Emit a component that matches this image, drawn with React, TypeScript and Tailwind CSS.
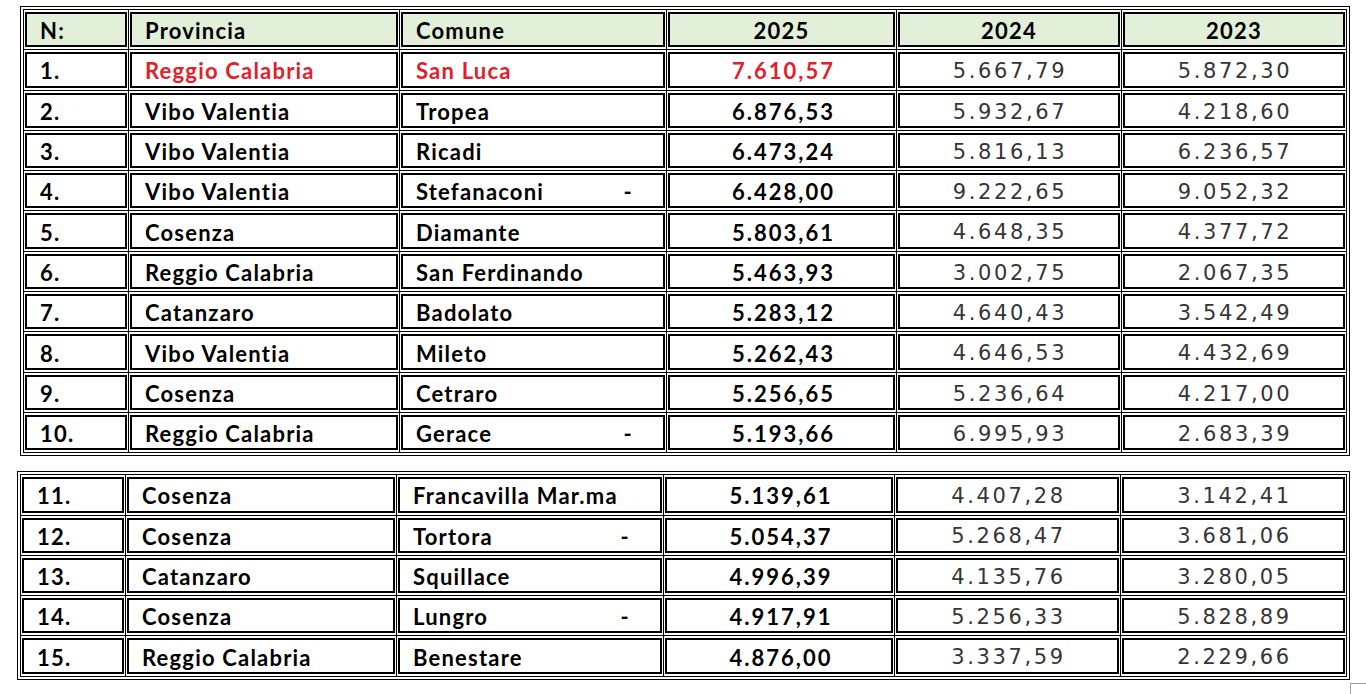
type Row = {
  n: string
  provincia: string
  comune: string
  dash?: boolean
  v2025: string
  v2024: string
  v2023: string
  red?: boolean
}

const firstRows: Row[] = [
  { n: "1.", provincia: "Reggio Calabria", comune: "San Luca", v2025: "7.610,57", v2024: "5.667,79", v2023: "5.872,30", red: true },
  { n: "2.", provincia: "Vibo Valentia", comune: "Tropea", v2025: "6.876,53", v2024: "5.932,67", v2023: "4.218,60" },
  { n: "3.", provincia: "Vibo Valentia", comune: "Ricadi", v2025: "6.473,24", v2024: "5.816,13", v2023: "6.236,57" },
  { n: "4.", provincia: "Vibo Valentia", comune: "Stefanaconi", dash: true, v2025: "6.428,00", v2024: "9.222,65", v2023: "9.052,32" },
  { n: "5.", provincia: "Cosenza", comune: "Diamante", v2025: "5.803,61", v2024: "4.648,35", v2023: "4.377,72" },
  { n: "6.", provincia: "Reggio Calabria", comune: "San Ferdinando", v2025: "5.463,93", v2024: "3.002,75", v2023: "2.067,35" },
  { n: "7.", provincia: "Catanzaro", comune: "Badolato", v2025: "5.283,12", v2024: "4.640,43", v2023: "3.542,49" },
  { n: "8.", provincia: "Vibo Valentia", comune: "Mileto", v2025: "5.262,43", v2024: "4.646,53", v2023: "4.432,69" },
  { n: "9.", provincia: "Cosenza", comune: "Cetraro", v2025: "5.256,65", v2024: "5.236,64", v2023: "4.217,00" },
  { n: "10.", provincia: "Reggio Calabria", comune: "Gerace", dash: true, v2025: "5.193,66", v2024: "6.995,93", v2023: "2.683,39" },
]

const secondRows: Row[] = [
  { n: "11.", provincia: "Cosenza", comune: "Francavilla Mar.ma", v2025: "5.139,61", v2024: "4.407,28", v2023: "3.142,41" },
  { n: "12.", provincia: "Cosenza", comune: "Tortora", dash: true, v2025: "5.054,37", v2024: "5.268,47", v2023: "3.681,06" },
  { n: "13.", provincia: "Catanzaro", comune: "Squillace", v2025: "4.996,39", v2024: "4.135,76", v2023: "3.280,05" },
  { n: "14.", provincia: "Cosenza", comune: "Lungro", dash: true, v2025: "4.917,91", v2024: "5.256,33", v2023: "5.828,89" },
  { n: "15.", provincia: "Reggio Calabria", comune: "Benestare", v2025: "4.876,00", v2024: "3.337,59", v2023: "2.229,66" },
]

// bold labels are wider in the screenshot than Lato's natural width, hence the tracking
const label = "font-['Lato',sans-serif] font-bold text-[22px] tracking-[1.2px] pt-[2px]"
const figure = "font-['Lato',sans-serif] font-bold text-[22px] tracking-[2px] pt-[2px]"
const plain = "font-['DejaVu_Sans',sans-serif] text-[21px] tracking-[2.6px] text-[#363636] pt-[4px]"

function Cell({ children, className = "", header = false }: { children?: React.ReactNode; className?: string; header?: boolean }) {
  return (
    <div className="bg-white px-px py-[2px]">
      <div className={`h-full border-2 border-black flex items-center ${header ? "bg-[#e2efd9]" : "bg-white"} ${className}`}>
        {children}
      </div>
    </div>
  )
}

function DataRow({ row }: { row: Row }) {
  const color = row.red ? "text-[#e3202a]" : "text-black"
  return (
    <>
      <Cell className={`pl-[13px] ${label} text-black`}>{row.n}</Cell>
      <Cell className={`pl-[13px] ${label} ${color}`}>{row.provincia}</Cell>
      <Cell className={`pl-[13px] pr-[30px] justify-between ${label} ${color}`}>
        <span>{row.comune}</span>
        {row.dash && <span>-</span>}
      </Cell>
      <Cell className={`justify-center pl-[4px] ${figure} ${color}`}>{row.v2025}</Cell>
      <Cell className={`justify-center pl-[2px] ${plain}`}>{row.v2024}</Cell>
      <Cell className={`justify-center pl-[2px] ${plain}`}>{row.v2023}</Cell>
    </>
  )
}

export default function App() {
  return (
    <div className="relative w-[1366px] h-[694px] overflow-hidden bg-white pt-[6px]">
      <div className="ml-[20px] w-[1330px] border-[4px] border-double border-black">
        <div className="grid grid-cols-[104px_270px_266px_229px_224px_1fr] auto-rows-[39.3px] gap-px bg-black">
          <Cell header className={`pl-[13px] ${label}`}>N:</Cell>
          <Cell header className={`pl-[13px] ${label}`}>Provincia</Cell>
          <Cell header className={`pl-[13px] ${label}`}>Comune</Cell>
          <Cell header className={`justify-center ${label}`}>2025</Cell>
          <Cell header className={`justify-center ${label}`}>2024</Cell>
          <Cell header className={`justify-center ${label}`}>2023</Cell>
          {firstRows.map((r) => (
            <DataRow key={r.n} row={r} />
          ))}
        </div>
      </div>

      <div className="ml-[17px] mt-[15px] w-[1333px] border-[4px] border-double border-black">
        <div className="grid grid-cols-[104px_270px_266px_230px_225px_1fr] auto-rows-[39.3px] gap-px bg-black">
          {secondRows.map((r) => (
            <DataRow key={r.n} row={r} />
          ))}
        </div>
      </div>

      <div className="absolute left-[1350px] top-[683px] w-[16px] h-[11px] border-l border-t border-gray-400" />
    </div>
  )
}
